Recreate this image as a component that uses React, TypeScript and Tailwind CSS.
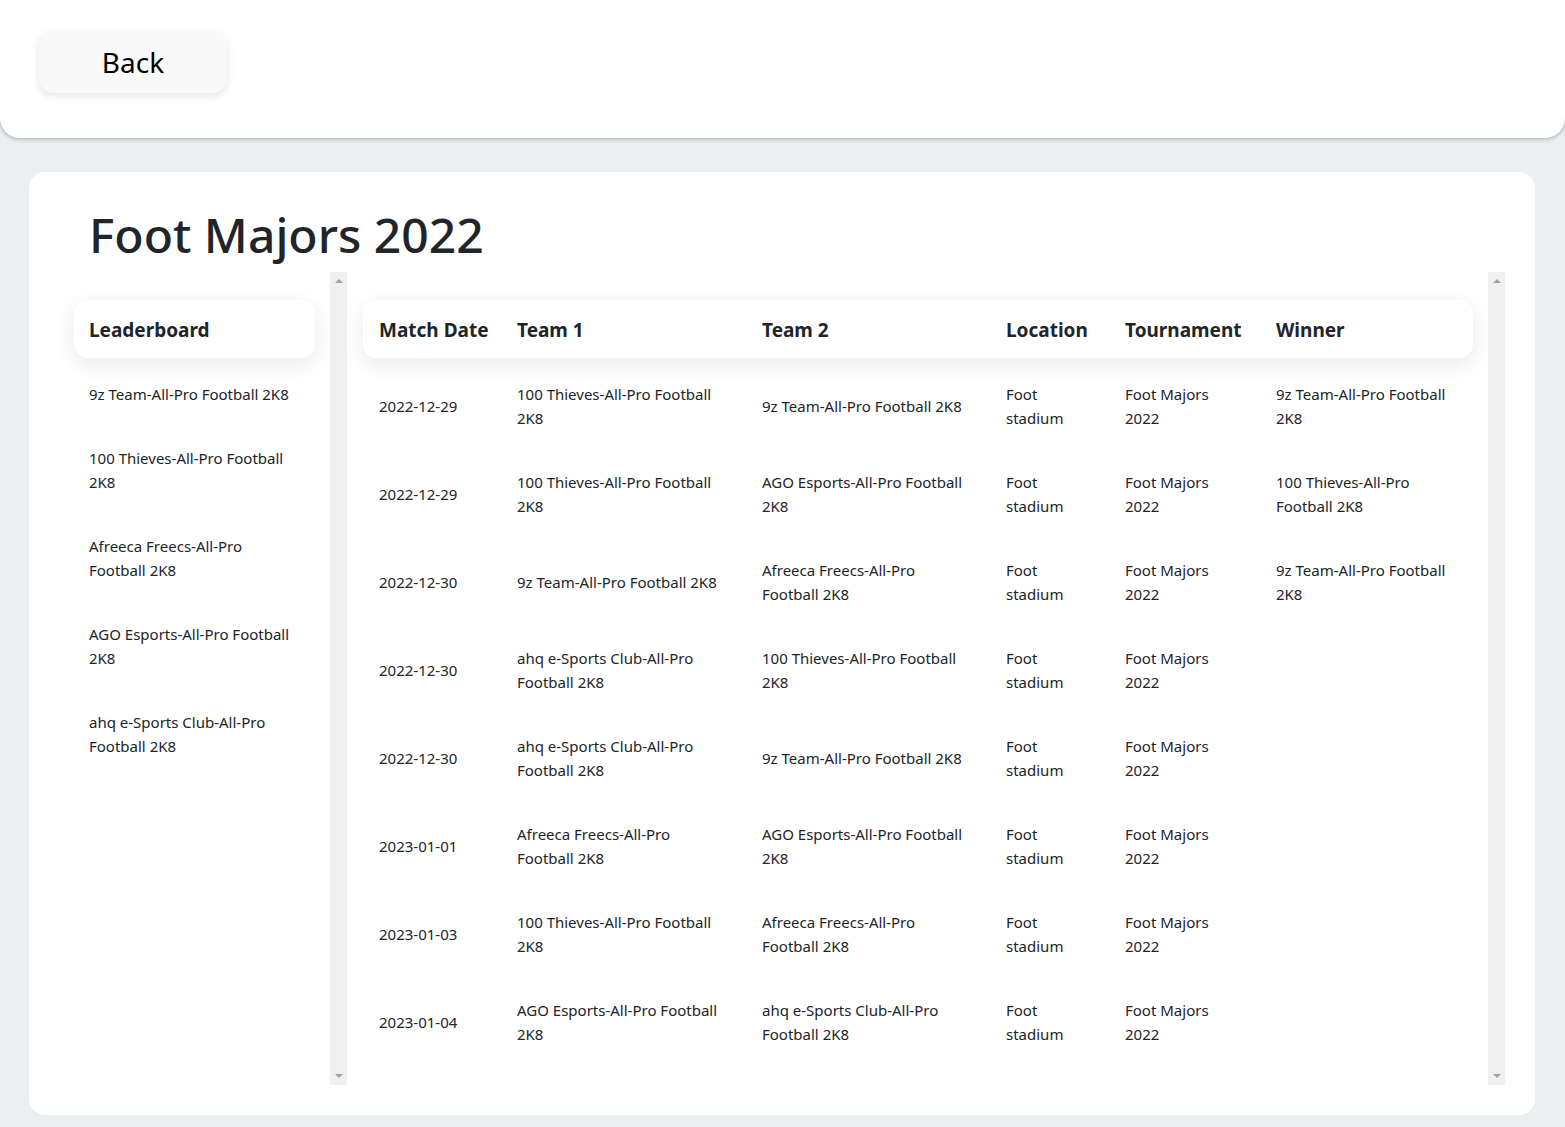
import React from "react";

const F = { fontFamily: '"Noto Sans", "Open Sans", sans-serif' };

type Row = { date: string; t1: string[]; t2: string[]; loc: string[]; tour: string[]; win: string[] };

const rows: Row[] = [
  { date: "2022-12-29", t1: ["100 Thieves-All-Pro Football", "2K8"], t2: ["9z Team-All-Pro Football 2K8"], loc: ["Foot", "stadium"], tour: ["Foot Majors", "2022"], win: ["9z Team-All-Pro Football", "2K8"] },
  { date: "2022-12-29", t1: ["100 Thieves-All-Pro Football", "2K8"], t2: ["AGO Esports-All-Pro Football", "2K8"], loc: ["Foot", "stadium"], tour: ["Foot Majors", "2022"], win: ["100 Thieves-All-Pro", "Football 2K8"] },
  { date: "2022-12-30", t1: ["9z Team-All-Pro Football 2K8"], t2: ["Afreeca Freecs-All-Pro", "Football 2K8"], loc: ["Foot", "stadium"], tour: ["Foot Majors", "2022"], win: ["9z Team-All-Pro Football", "2K8"] },
  { date: "2022-12-30", t1: ["ahq e-Sports Club-All-Pro", "Football 2K8"], t2: ["100 Thieves-All-Pro Football", "2K8"], loc: ["Foot", "stadium"], tour: ["Foot Majors", "2022"], win: [] },
  { date: "2022-12-30", t1: ["ahq e-Sports Club-All-Pro", "Football 2K8"], t2: ["9z Team-All-Pro Football 2K8"], loc: ["Foot", "stadium"], tour: ["Foot Majors", "2022"], win: [] },
  { date: "2023-01-01", t1: ["Afreeca Freecs-All-Pro", "Football 2K8"], t2: ["AGO Esports-All-Pro Football", "2K8"], loc: ["Foot", "stadium"], tour: ["Foot Majors", "2022"], win: [] },
  { date: "2023-01-03", t1: ["100 Thieves-All-Pro Football", "2K8"], t2: ["Afreeca Freecs-All-Pro", "Football 2K8"], loc: ["Foot", "stadium"], tour: ["Foot Majors", "2022"], win: [] },
  { date: "2023-01-04", t1: ["AGO Esports-All-Pro Football", "2K8"], t2: ["ahq e-Sports Club-All-Pro", "Football 2K8"], loc: ["Foot", "stadium"], tour: ["Foot Majors", "2022"], win: [] },
];

const leaders: string[][] = [
  ["9z Team-All-Pro Football 2K8"],
  ["100 Thieves-All-Pro Football", "2K8"],
  ["Afreeca Freecs-All-Pro", "Football 2K8"],
  ["AGO Esports-All-Pro Football", "2K8"],
  ["ahq e-Sports Club-All-Pro", "Football 2K8"],
];

function Lines({ lines }: { lines: string[] }) {
  return (
    <div className="flex flex-col">
      {lines.map((l, i) => (
        <span key={i} className="whitespace-nowrap leading-6">
          {l}
        </span>
      ))}
    </div>
  );
}

function ScrollBar() {
  return (
    <div className="w-[17px] shrink-0 bg-[#f0f0f0] flex flex-col items-center justify-between py-[7px]">
      <div className="w-0 h-0 border-l-[4px] border-r-[4px] border-b-[4px] border-l-transparent border-r-transparent border-b-[#a3a3a3]" />
      <div className="w-0 h-0 border-l-[4px] border-r-[4px] border-t-[4px] border-l-transparent border-r-transparent border-t-[#a3a3a3]" />
    </div>
  );
}

const cols = ["w-[138px]", "w-[245px]", "w-[244px]", "w-[119px]", "w-[151px]", "w-[213px]"];

export default function App() {
  return (
    <div style={F} className="w-[1565px] h-[1127px] bg-[#ebeff0] text-[#212529] overflow-hidden">
      <div className="h-[138px] bg-white rounded-b-[20px] shadow-[0_1px_4px_rgba(0,0,0,0.3)] pl-[39px] pt-[31px]">
        <button className="w-[188px] h-[62px] rounded-[14px] bg-[#f9f9f9] shadow-[0_3px_8px_rgba(0,0,0,0.1)] text-[28px] text-black">
          Back
        </button>
      </div>

      <div className="mt-[34px] ml-[29px] w-[1506px] h-[943px] bg-white rounded-[16px] px-[30px] pt-[30px] pb-[30px] flex flex-col">
        <h1 className="pl-[30px] text-[48px] leading-[66px] font-medium text-[#212529] h-[70px]">Foot Majors 2022</h1>
        <div className="flex flex-1 min-h-0">
          {/* Leaderboard */}
          <div className="flex w-[288px] shrink-0">
            <div className="flex-1 overflow-hidden px-[15px] pt-[28px]">
              <div className="h-[58px] rounded-[14px] bg-white shadow-[0_6px_24px_rgba(0,0,0,0.09)] flex items-center px-[15px] pt-[3px] text-[19px] font-bold">
                Leaderboard
              </div>
              <div className="mt-[4px] text-[15px] text-[#212529]">
                {leaders.map((l, i) => (
                  <div key={i} className="px-[15px] py-[20px]">
                    <Lines lines={l} />
                  </div>
                ))}
              </div>
            </div>
            <ScrollBar />
          </div>

          {/* Matches */}
          <div className="flex flex-1 ml-[1px]">
            <div className="flex-1 overflow-hidden px-[15px] pt-[28px]">
              <div className="h-[58px] rounded-[14px] bg-white shadow-[0_6px_24px_rgba(0,0,0,0.09)] flex items-center pt-[3px] text-[19px] font-bold">
                {["Match Date", "Team 1", "Team 2", "Location", "Tournament", "Winner"].map((h, i) => (
                  <div key={h} className={`${cols[i]} shrink-0 px-[16px] whitespace-nowrap`}>
                    {h}
                  </div>
                ))}
              </div>
              <div className="mt-[4px] text-[15px] text-[#212529]">
                {rows.map((r, i) => (
                  <div key={i} className="flex items-center h-[88px]">
                    <div className={`${cols[0]} shrink-0 px-[16px] whitespace-nowrap`}>{r.date}</div>
                    <div className={`${cols[1]} shrink-0 px-[16px]`}><Lines lines={r.t1} /></div>
                    <div className={`${cols[2]} shrink-0 px-[16px]`}><Lines lines={r.t2} /></div>
                    <div className={`${cols[3]} shrink-0 px-[16px]`}><Lines lines={r.loc} /></div>
                    <div className={`${cols[4]} shrink-0 px-[16px]`}><Lines lines={r.tour} /></div>
                    <div className={`${cols[5]} shrink-0 px-[16px]`}><Lines lines={r.win} /></div>
                  </div>
                ))}
              </div>
            </div>
            <ScrollBar />
          </div>
        </div>
      </div>
    </div>
  );
}
